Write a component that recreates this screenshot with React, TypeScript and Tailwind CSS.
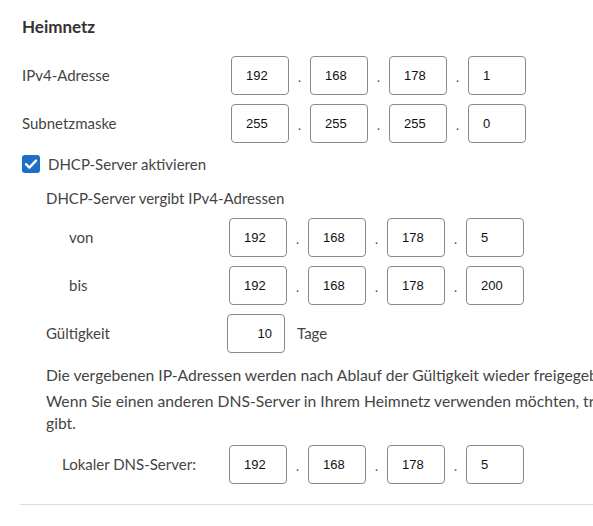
import React from "react";

const labelFont = { fontFamily: "Lato, 'Noto Sans', sans-serif" };

function Octet({ value, right = false }: { value: string; right?: boolean }) {
  return (
    <div
      className={`w-[58px] h-[39px] shrink-0 border border-[#8a8a8a] rounded-[4px] bg-white flex items-center text-[13px] text-[#111] ${
        right ? "justify-end pr-[12px]" : "pl-[14px]"
      }`}
      style={{ fontFamily: "'Liberation Sans', Arial, sans-serif" }}
    >
      {value}
    </div>
  );
}

function IpField({ parts }: { parts: string[] }) {
  return (
    <div className="flex items-center">
      {parts.map((p, i) => (
        <React.Fragment key={i}>
          {i > 0 && (
            <span className="w-[21px] text-center text-[13px] text-[#555] pt-[4px]">.</span>
          )}
          <Octet value={p} />
        </React.Fragment>
      ))}
    </div>
  );
}

function Row({
  label,
  labelClass,
  children,
  className = "",
}: {
  label: string;
  labelClass: string;
  children: React.ReactNode;
  className?: string;
}) {
  return (
    <div className={`flex items-center ${className}`}>
      <span className={`shrink-0 text-[15px] text-[#444] ${labelClass}`}>{label}</span>
      {children}
    </div>
  );
}

export default function App() {
  return (
    <div className="w-[593px] h-[526px] overflow-hidden bg-white" style={labelFont}>
      <div className="w-[800px] pl-[22px]">
        {/* Überschrift */}
        <h2 className="pt-[16px] text-[17px] font-bold text-[#333] leading-[22px]">Heimnetz</h2>

        <Row label="IPv4-Adresse" labelClass="w-[209px]" className="mt-[18px]">
          <IpField parts={["192", "168", "178", "1"]} />
        </Row>
        <Row label="Subnetzmaske" labelClass="w-[209px]" className="mt-[9px]">
          <IpField parts={["255", "255", "255", "0"]} />
        </Row>

        {/* DHCP */}
        <div className="flex items-center mt-[11px] h-[20px]">
          <svg width="18" height="18" viewBox="0 0 18 18" className="shrink-0">
            <rect x="0" y="0" width="18" height="18" rx="3" fill="#1c6fc4" />
            <path d="M4 9.2 L7.4 12.6 L14 5.6" fill="none" stroke="#fff" strokeWidth="2.4" strokeLinecap="round" strokeLinejoin="round" />
          </svg>
          <span className="ml-[8px] text-[15px] text-[#444]">DHCP-Server aktivieren</span>
        </div>

        <div className="pl-[24px]">
          <p className="mt-[14px] text-[15px] text-[#444] leading-[20px]">
            DHCP-Server vergibt IPv4-Adressen
          </p>

          <Row label="von" labelClass="w-[183px] pl-[23px]" className="mt-[10px]">
            <IpField parts={["192", "168", "178", "5"]} />
          </Row>
          <Row label="bis" labelClass="w-[183px] pl-[23px]" className="mt-[9px]">
            <IpField parts={["192", "168", "178", "200"]} />
          </Row>
          <Row label="Gültigkeit" labelClass="w-[181px]" className="mt-[9px]">
            <Octet value="10" right />
            <span className="ml-[12px] text-[15px] text-[#444]">Tage</span>
          </Row>

          <p className="mt-[11px] text-[15.7px] text-[#444] leading-[22px] whitespace-nowrap">
            Die vergebenen IP-Adressen werden nach Ablauf der Gültigkeit wieder freigegeben.
          </p>
          <p className="mt-[4px] text-[15.7px] text-[#444] leading-[22px] whitespace-nowrap">
            Wenn Sie einen anderen DNS-Server in Ihrem Heimnetz verwenden möchten, tragen Sie hier dessen IPv4-Adresse ein, die der DHCP-Server weiter
            <br />
            gibt.
          </p>

          <Row label="Lokaler DNS-Server:" labelClass="w-[183px] pl-[16px]" className="mt-[11px]">
            <IpField parts={["192", "168", "178", "5"]} />
          </Row>
        </div>

        <div className="mt-[20px] -ml-[2px] h-px bg-[#dcdcdc]" />
      </div>
    </div>
  );
}
